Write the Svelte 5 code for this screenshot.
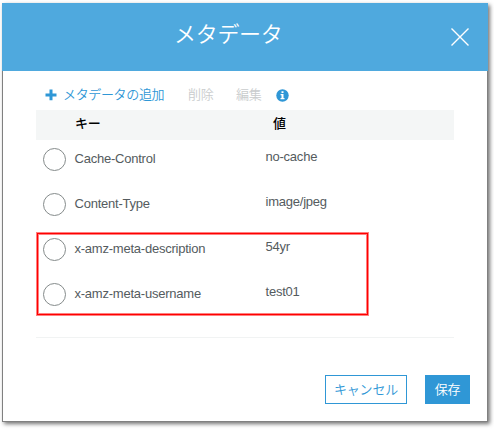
<script>
  const rows = [
    ['Cache-Control', 'no-cache'],
    ['Content-Type', 'image/jpeg'],
    ['x-amz-meta-description', '54yr'],
    ['x-amz-meta-username', 'test01'],
  ];
</script>

<div class="page">
  <section class="dialog">
    <header>
      <h1>メタデータ</h1>
      <button class="close" aria-label="閉じる">
        <svg width="18" height="18" viewBox="0 0 18 18"><path d="M.5.5l17 17M17.5.5l-17 17" fill="none" stroke="#fff" stroke-width="1.4" /></svg>
      </button>
    </header>
    <div class="body">
      <div class="toolbar">
        <svg class="plus" width="12" height="12" viewBox="0 0 12 12"><path d="M4.500.5h3v3.900h4v3h-4v3.900h-3V7.400H.5v-3h4z" fill="#2f97d6" /></svg>
        <span class="add">メタデータの追加</span>
        <span class="off del">削除</span>
        <span class="off edit">編集</span>
        <svg class="info" width="13" height="13" viewBox="0 0 13 13">
          <circle cx="6.500" cy="6.500" r="6.200" fill="#2f97d6" />
          <path d="M5.500 2.200h2v1.700h-2zM4.600 5h2.900v4h1v1.300h-4V9h1V6.200h-.9z" fill="#fff" />
        </svg>
      </div>
      <div class="thead"><span class="k">キー</span><span>値</span></div>
      <div class="rows">
        {#each rows as [key, value]}
          <div class="row">
            <svg width="24" height="24" viewBox="0 0 24 24"><circle cx="12.500" cy="12.500" r="11" fill="#fff" stroke="#858b8b" /></svg>
            <span class="key">{key}</span>
            <span class="value">{value}</span>
          </div>
        {/each}
        <div class="mark"></div>
      </div>
      <footer>
        <button class="btn cancel"><span>キャンセル</span></button>
        <button class="btn save"><span>保存</span></button>
      </footer>
    </div>
  </section>
</div>

<style>
  .page {
    box-sizing: border-box;
    width: 494px;
    height: 431px;
    padding: 3px 0 0 2px;
    overflow: hidden;
    background: #fff;
    font-family: "Liberation Sans", "Noto Sans CJK JP", sans-serif;
    font-size: 13px;
    color: #545b5e;
  }
  .dialog {
    width: 486px;
    height: 419px;
    display: flex;
    flex-direction: column;
    background: #fff;
    box-shadow: 2px 2px 4px rgba(0, 0, 0, .55);
  }
  header {
    height: 68px;
    flex: none;
    display: flex;
    box-sizing: border-box;
    padding-left: 172px;
    background: #4fa9de;
  }
  h1 {
    width: 120px;
    margin: 16px 0 0;
    font-size: 22px;
    line-height: 32px;
    font-weight: 350;
    letter-spacing: -.3px;
    color: #fff;
    white-space: nowrap;
  }
  button { font-family: inherit; padding: 0; }
  .close {
    width: 18px;
    height: 18px;
    margin: 25px 0 0 157px;
    border: 0;
    background: none;
  }
  .close svg { display: block; }
  .body {
    flex: 1;
    box-sizing: border-box;
    border: 1px solid #808080;
    border-top: 0;
    padding: 0 33px;
  }
  .toolbar {
    height: 39px;
    box-sizing: border-box;
    padding: 14px 0 0 9px;
    display: flex;
    font-size: 13px;
    line-height: 20px;
    font-weight: 350;
    white-space: nowrap;
  }
  .plus { margin-top: 4px; }
  .add { width: 117px; margin-left: 6px; letter-spacing: -.35px; color: #2f97d6; }
  .off { color: #c9cccd; letter-spacing: -.3px; }
  .off { width: 48px; margin-left: 8px; }
  .edit { width: 33px; margin-left: 0; }
  .info { margin: 4px 0 0 7px; }
  .thead {
    display: flex;
    height: 30px;
    box-sizing: border-box;
    padding-left: 39px;
    width: 418px;
    background: #f4f6f6;
    color: #000;
    font-weight: 500;
    font-size: 13px;
    line-height: 28px;
    letter-spacing: -.3px;
  }
  .k { width: 198px; }
  .rows { position: relative; height: 197px; width: 418px; border-bottom: 1px solid #f1f3f3; }
  .row { display: flex; height: 45px; padding-left: 6px; letter-spacing: -.23px; }
  .row svg { flex: none; margin-top: 7px; }
  .key { width: 191px; margin: 9px 0 0 8.500px; line-height: 19px; }
  .value { margin-top: 7px; line-height: 19px; }
  .mark {
    position: absolute;
    left: 1px;
    top: 93px;
    width: 329px;
    height: 80px;
    border: 1px solid #f00;
    box-shadow: 0 0 0 1px rgba(255, 0, 0, .5), inset 0 0 0 1px rgba(255, 0, 0, .5);
  }
  footer { display: flex; gap: 18px; padding: 37px 0 0 289px; }
  .btn {
    box-sizing: border-box;
    flex: none;
    height: 29px;
    border: 1px solid #2f97d6;
    font-size: 13px;
    line-height: 25px;
    font-weight: 350;
    letter-spacing: -.2px;
    white-space: nowrap;
  }
  .cancel { width: 82px; background: #fff; color: #2f97d6; }
  .save { width: 45px; background: #2f97d6; color: #fff; }
</style>
